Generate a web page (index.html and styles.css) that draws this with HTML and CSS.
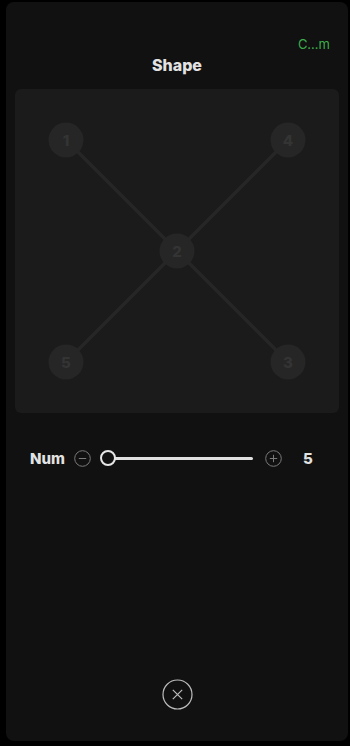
FILE: index.html
```html
<!DOCTYPE html>
<html lang="en">
  <head>
    <meta charset="UTF-8" />
    <meta name="viewport" content="width=device-width, initial-scale=1.0" />
    <title>Shape</title>
    <link rel="stylesheet" href="styles.css">
  </head>
  <body>
    <div class="panel">
      <div class="top-bar">
        <span class="custom-link">C…m</span>
      </div>
      <h1 class="panel-title">Shape</h1>
      <div class="shape-card">
        <svg class="shape-svg" width="324" height="324" viewBox="0 0 324 324">
          <g stroke="#262626" stroke-width="3.5">
            <line x1="51" y1="51" x2="273" y2="273" />
            <line x1="273" y1="51" x2="51" y2="273" />
          </g>
          <g fill="#262626">
            <circle cx="51" cy="51" r="17.5" />
            <circle cx="273" cy="51" r="17.5" />
            <circle cx="162" cy="162" r="17.5" />
            <circle cx="51" cy="273" r="17.5" />
            <circle cx="273" cy="273" r="17.5" />
          </g>
          <g class="node-label" text-anchor="middle">
            <text x="51" y="56.5">1</text>
            <text x="273" y="56.5">4</text>
            <text x="162" y="167.5">2</text>
            <text x="51" y="278.5">5</text>
            <text x="273" y="278.5">3</text>
          </g>
        </svg>
      </div>
      <div class="num-row">
        <span class="num-label">Num</span>
        <span class="step-button">
          <svg width="17" height="17" viewBox="0 0 17 17"><circle cx="8.5" cy="8.5" r="7.8" fill="none" stroke="#7a7a7a" stroke-width="1"/><line x1="4.8" y1="8.5" x2="12.2" y2="8.5" stroke="#7a7a7a" stroke-width="1"/></svg>
        </span>
        <div class="slider">
          <div class="slider-track"></div>
          <div class="slider-thumb"></div>
        </div>
        <span class="step-button">
          <svg width="17" height="17" viewBox="0 0 17 17"><circle cx="8.5" cy="8.5" r="7.8" fill="none" stroke="#7a7a7a" stroke-width="1"/><line x1="4.8" y1="8.5" x2="12.2" y2="8.5" stroke="#7a7a7a" stroke-width="1"/><line x1="8.5" y1="4.8" x2="8.5" y2="12.2" stroke="#7a7a7a" stroke-width="1"/></svg>
        </span>
        <span class="num-value">5</span>
      </div>
      <button class="close-button" type="button">
        <svg width="31" height="31" viewBox="0 0 31 31"><circle cx="15.5" cy="15.5" r="14.5" fill="none" stroke="#bdbdbd" stroke-width="1.2"/><path d="M10.8 10.8 L20.2 20.2 M20.2 10.8 L10.8 20.2" stroke="#bdbdbd" stroke-width="1.2" fill="none"/></svg>
      </button>
    </div>
  </body>
</html>
```

FILE: styles.css
```css
body {
  margin: 0;
  background-color: #000;
  font-family: Inter, "Noto Sans", sans-serif;
}
.panel {
  display: flex;
  flex-direction: column;
  box-sizing: border-box;
  height: 739px;
  margin: 2px 2px 0 6px;
  padding-top: 31px;
  background-color: #111;
  border-radius: 8px;
}
.top-bar {
  display: flex;
  justify-content: flex-end;
  padding-right: 18px;
  height: 22px;
  line-height: 22px;
}
.custom-link {
  color: #3dae4c;
  font-size: 13px;
}
.panel-title {
  margin: 0;
  height: 20px;
  line-height: 20px;
  text-align: center;
  color: #e2e2e2;
  font-size: 16px;
  font-weight: 800;
}
.shape-card {
  width: 324px;
  height: 324px;
  margin: 14px 0 0 9px;
  background-color: #1b1b1b;
  border-radius: 6px;
}
.shape-svg {
  display: block;
}
.node-label {
  fill: #343434;
  font-size: 15px;
  font-weight: 800;
  font-family: Inter, sans-serif;
}
.num-row {
  display: flex;
  align-items: center;
  height: 30px;
  margin-top: 30px;
  padding-left: 24px;
}
.num-label {
  width: 44px;
  color: #e2e2e2;
  font-size: 15px;
  font-weight: 800;
}
.step-button {
  display: flex;
  width: 17px;
  height: 17px;
}
.slider {
  position: relative;
  width: 153px;
  height: 16px;
  margin: 0 12px 0 9px;
}
.slider-track {
  position: absolute;
  left: 6px;
  right: 0;
  top: 6.5px;
  height: 3px;
  background-color: #e0e0e0;
  border-radius: 2px;
}
.slider-thumb {
  position: absolute;
  left: 0;
  top: 0;
  box-sizing: border-box;
  width: 16px;
  height: 16px;
  background-color: #111;
  border: 2.5px solid #e6e6e6;
  border-radius: 50%;
}
.num-value {
  margin-left: 21px;
  color: #e2e2e2;
  font-size: 15px;
  font-weight: 800;
}
.close-button {
  display: flex;
  align-self: center;
  margin: auto 0 31px 0;
  padding: 0;
  background: none;
  border: none;
  cursor: pointer;
}
```
